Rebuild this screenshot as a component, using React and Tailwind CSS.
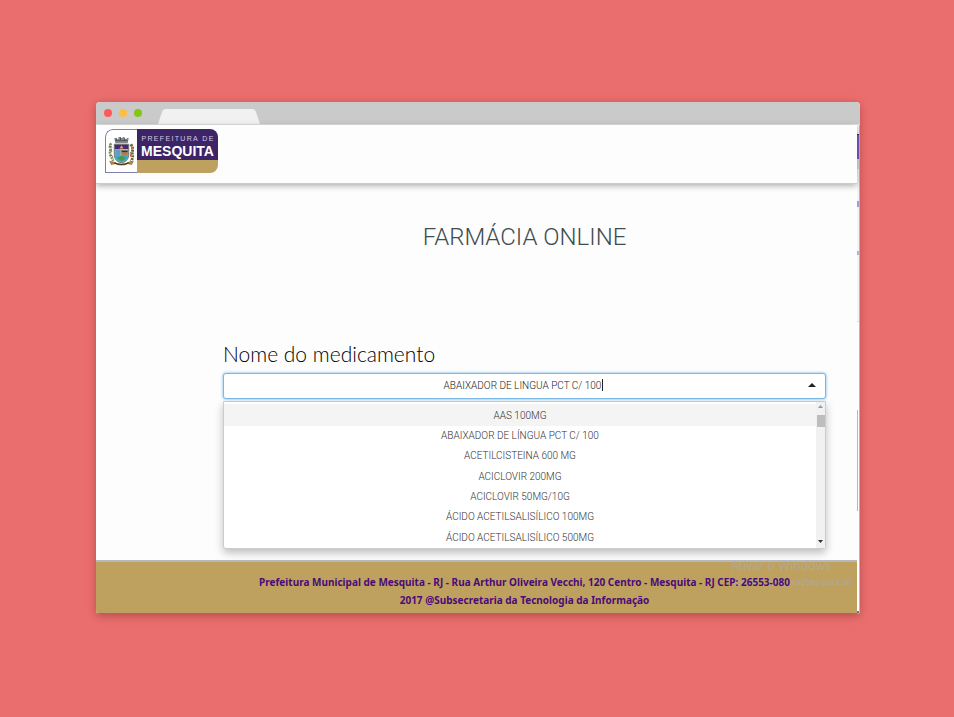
import React from "react";

const medicines = [
  "ABAIXADOR DE LÍNGUA PCT C/ 100",
  "ACETILCISTEINA 600 MG",
  "ACICLOVIR 200MG",
  "ACICLOVIR 50MG/10G",
  "ÁCIDO ACETILSALISÍLICO 100MG",
  "ÁCIDO ACETILSALISÍLICO 500MG",
];

function TitleBar() {
  return (
    <div className="flex h-[23px] items-end border-b border-[#e2e2e2] bg-[#cacaca] pl-2">
      <div className="flex gap-[7px] pb-[7px]">
        <span className="size-2 rounded-full bg-[#fc5b57]" />
        <span className="size-2 rounded-full bg-[#fdbe41]" />
        <span className="size-2 rounded-full bg-[#83c614]" />
      </div>
      <svg className="ml-4 h-[15px] w-[102px]" viewBox="0 0 102 15" aria-hidden="true">
        <path d="M0 15 L4 3 Q5 0 8 0 H94 Q97 0 98 3 L102 15 Z" fill="#f1f1f1" />
      </svg>
    </div>
  );
}

function Crest() {
  return (
    <svg className="h-[31px] w-[27px]" viewBox="0 0 26 30" aria-hidden="true">
      <path d="M3 7 Q1 10 2.500 13 Q1 17 3 20 L5 24" fill="none" stroke="#82905d" strokeWidth="2.6" strokeDasharray="2 .8" />
      <path d="M1 9l3 2M1 14l3 1M2 18l3 2" stroke="#55683c" strokeWidth=".8" />
      <path d="M22 8 Q25 12 23 16 Q25 20 22 25" fill="none" stroke="#5f6539" strokeWidth="2.8" strokeDasharray="2 .8" />
      <path d="M23 10v3M22 17v3" stroke="#d06b35" strokeWidth="1.5" />
      <path d="M6 2h2v1h2V1h2v1h2V1h2v2h2V2h2l-1 5H7z" fill="#85888d" />
      <path d="M7 4.500h12M8 2v2M12 1v3M16 2v2" stroke="#45484e" strokeWidth=".8" />
      <path d="M6 8h14v11q-1 6-7 7-6-1-7-7z" fill="#c2b38d" stroke="#3f5265" strokeWidth=".7" />
      <path d="M6.500 8.500h13v4h-13z" fill="#4b2772" />
      <path d="M11 12l2-3 2 3z" fill="#d6a83e" />
      <path d="M7 13h5v6H7z" fill="#5c9dcc" />
      <path d="M13 14h6v2h-6z" fill="#30363b" />
      <path d="M13 16h6v3h-6z" fill="#b87946" />
      <path d="M6.500 19h13q-1 5-6.500 6-5.500-1-6.500-6z" fill="#37a9c9" />
      <path d="M9 21l4-2 4 2-4 4z" fill="#479b4c" />
      <path d="M1 24l5 1q7 4 14 0l5-1-2 4-4-1q-6 3-12 0l-4 1z" fill="#a98343" />
      <path d="M6 26q7 3 14 0" fill="none" stroke="#4f3820" strokeWidth="1.2" />
    </svg>
  );
}

function Logo() {
  return (
    <div className="flex h-11 w-[113px] overflow-hidden rounded-tl-lg rounded-r-lg">
      <div className="flex w-8 items-center justify-center rounded-tl-lg border border-r-0 border-[#847fa9] bg-white">
        <Crest />
      </div>
      <div className="flex flex-1 flex-col text-white">
        <div className="flex h-[31px] flex-col items-center bg-[#3d2466] pt-[6px] font-['Liberation_Sans',Arial,sans-serif]">
          <span className="flex w-[72px] justify-between text-[7px] leading-[8px] text-[#d4cce2]">
            {"PREFEITURA DE".split("").map((letter, i) => (
              <span key={i} className="whitespace-pre">{letter}</span>
            ))}
          </span>
          <span className="text-[14px] leading-4 font-bold">MESQUITA</span>
        </div>
        <div className="flex-1 bg-[#bea15e]" />
      </div>
    </div>
  );
}

function EdgeStrip() {
  return (
    <div className="flex w-[3px] shrink-0 flex-col border-r border-[#b8b8b8] bg-[#f4f4f4]" aria-hidden="true">
      <div className="h-[9px]" />
      <div className="h-[25px] border-t border-[#402469] bg-[#7958bd]" />
      <div className="h-[10px] bg-[#d8d8d8]" />
      <div className="h-[32px]" />
      <div className="h-[6px] bg-[#a99bd0]" />
      <div className="h-[44px]" />
      <div className="h-[4px] bg-[#b5b4d6]" />
      <div className="h-[67px] border-b border-[#dddddd]" />
      <div className="h-[88px] bg-[#fdfdfd]" />
      <div className="h-[101px] border-l border-[#b5b7bd] bg-[#fdfdfd]" />
      <div className="flex-1 bg-[#fdfdfd]" />
      <div className="h-[3px] bg-[#777777]" />
    </div>
  );
}

function Picker() {
  return (
    <div>
      <label htmlFor="medicine" className="block text-[21px] leading-8 font-light text-black">
        Nome do medicamento
      </label>
      <div className="relative mt-[3px]">
        <input
          id="medicine"
          role="combobox"
          aria-expanded="true"
          aria-controls="medicine-list"
          defaultValue="ABAIXADOR DE LINGUA PCT C/ 100"
          className="block h-[26px] w-full rounded-[3px] border border-[#7ab8e8] bg-white pr-5 pb-[2px] pl-4 text-center font-[Roboto,sans-serif] text-[10px] font-light text-[#222222] shadow-[0_0_3px_#66afe9] outline-none"
        />
        <span className="absolute top-[6px] left-1/2 ml-[77px] h-3 w-px bg-[#222222]" />
        <svg className="absolute top-[10px] right-[10px] h-1 w-2" viewBox="0 0 8 4" aria-hidden="true">
          <path d="M0 4 L4 0 L8 4Z" fill="#222" />
        </svg>
      </div>
      <div className="mt-[2px] flex rounded-b-[3px] border border-[#cccccc] bg-white font-[Roboto,sans-serif] text-[10px] font-light text-[#333333] shadow-[0_4px_8px_rgba(0,0,0,0.25)]">
        <ul id="medicine-list" role="listbox" aria-label="Medicamentos" className="flex h-[146px] flex-1 flex-col pt-[2px] text-center">
          <li role="option" aria-selected="true" className="flex h-[22px] shrink-0 items-center justify-center bg-[#f4f4f4]">
            AAS 100MG
          </li>
          {medicines.map((name) => (
            <li key={name} role="option" aria-selected="false" className="flex flex-1 items-center justify-center leading-4">
              {name}
            </li>
          ))}
        </ul>
        <div className="flex w-[9px] flex-col items-center bg-[#f1f1f1] pt-[3px] pb-[5px]" aria-hidden="true">
          <svg className="h-[3px] w-[5px]" viewBox="0 0 5 3"><path d="M0 3L2.500 0L5 3Z" fill="#999" /></svg>
          <div className="mt-[7px] h-3 w-2 bg-[#bdbdbd]" />
          <svg className="mt-auto h-[3px] w-[5px]" viewBox="0 0 5 3"><path d="M0 0L2.500 3L5 0Z" fill="#333" /></svg>
        </div>
      </div>
    </div>
  );
}

export default function App() {
  return (
    <div className="min-h-screen bg-[#eb6e6e] pt-[102px] pr-[94px] pb-[102px] pl-24 font-[Lato,sans-serif]">
      <div className="overflow-hidden rounded-[4px] bg-[#fdfdfd] shadow-[0_2px_8px_rgba(80,20,20,0.35)]">
        <TitleBar />
        <div className="flex">
          <div className="min-w-0 flex-1">
            <header className="relative border-b border-[#cccccc] bg-[#fdfdfd] pt-1 pb-[10px] pl-[9px] shadow-[0_2px_6px_rgba(0,0,0,0.3)]">
              <Logo />
            </header>
            <main className="pt-9 pr-[31px] pb-[11px] pl-[127px]">
              <h1 className="mb-[84px] text-center font-[Roboto,sans-serif] text-[24px] leading-[34px] font-light text-[#3f4c50]">
                FARMÁCIA ONLINE
              </h1>
              <Picker />
            </main>
            <footer className="relative border-t-2 border-b border-t-[#b5b9bd] border-b-[#8b7a59] bg-[#bea15e] pt-[11px] pr-[31px] pb-1 pl-[127px] text-center font-['Noto_Sans',sans-serif] text-[10px] leading-[18px] font-bold text-[#4b0b78]">
              <div className="absolute -top-[6px] right-0 w-[126px] overflow-hidden text-left font-['Open_Sans',sans-serif] font-light whitespace-nowrap text-[#adadad]">
                <p className="text-[13px] leading-[18px]">Ativar o Windows</p>
                <p className="text-[9px] leading-4">Acesse Configurações para ati</p>
              </div>
              <p className="relative whitespace-nowrap">
                Prefeitura Municipal de Mesquita - RJ - Rua Arthur Oliveira Vecchi, 120 Centro - Mesquita - RJ CEP: 26553-080
              </p>
              <p>2017 @Subsecretaria da Tecnologia da Informação</p>
            </footer>
          </div>
          <EdgeStrip />
        </div>
      </div>
    </div>
  );
}
